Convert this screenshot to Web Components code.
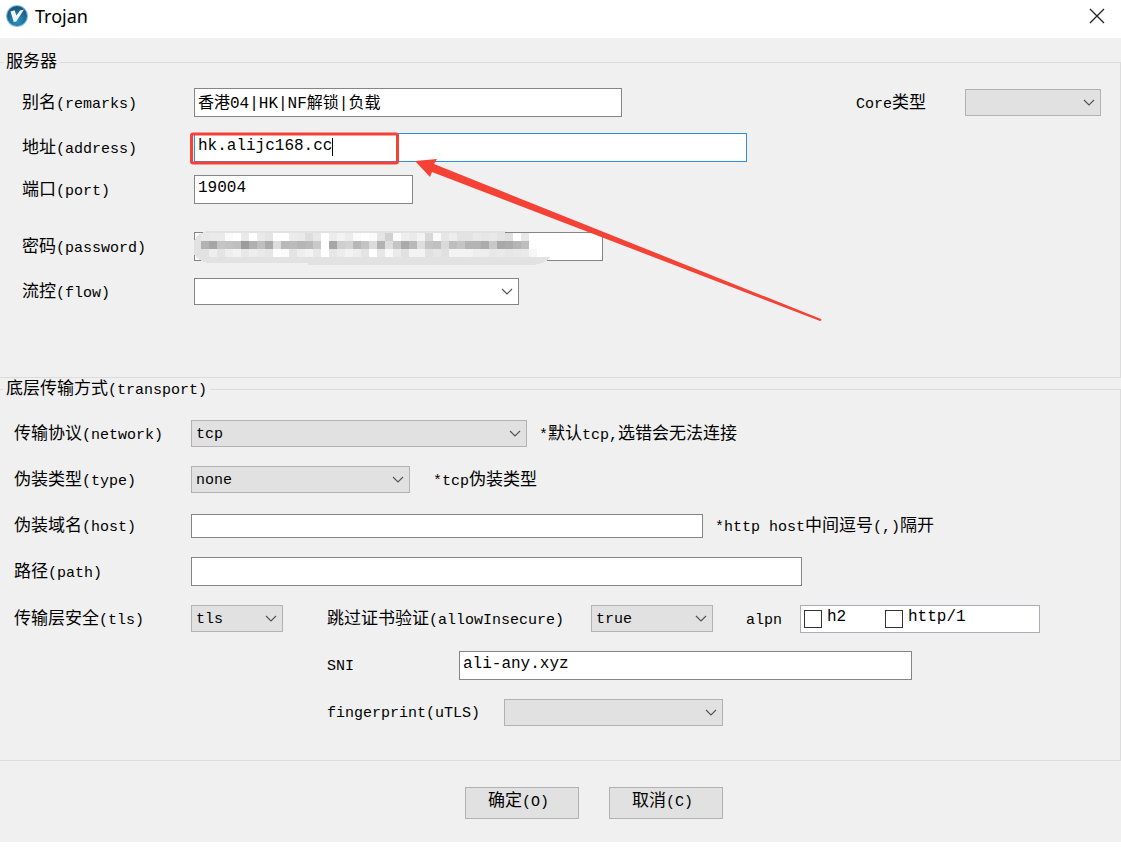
<!DOCTYPE html>
<html lang="zh-CN">
<head>
<meta charset="utf-8">
<title>Trojan</title>
<style>
  body {
    margin: 0;
    background: #fff;
    color: #000;
    font-family: "Liberation Mono", "Noto Sans CJK SC", monospace;
    font-size: 15px;
  }
</style>
</head>
<body>
<server-dialog></server-dialog>

<script>
const HAN = /([\u4e00-\u9fff]+)/;

/* Wraps Chinese runs so that they can be set a little larger than the Latin text. */
function mixed(text) {
  return text.split(HAN).map(t => HAN.test(t) ? `<span class="han">${t}</span>` : t).join("");
}

const BASE = `
  * { box-sizing: border-box; }
  .han { font-size: 17px; }
`;

function define(name, render) {
  customElements.define(name, class extends HTMLElement {
    connectedCallback() {
      if (this.shadowRoot) return;
      this.attachShadow({ mode: "open" }).innerHTML = render(this);
    }
  });
}

define("title-bar", el => `
  <style>${BASE}
    :host { display: flex; align-items: center; height: 38px; padding: 0 16px 7px 6px; gap: 7px; background: #fff; }
    h1 { flex: 1; margin: 0; font: 400 18px/24px "Noto Sans", sans-serif; }
    svg { display: block; }
    button { border: 0; padding: 0; background: none; }
  </style>
  <svg width="22" height="22" viewBox="0 0 22 22" aria-hidden="true">
    <defs><radialGradient id="g" cx="50%" cy="75%" r="65%">
      <stop offset="0" stop-color="#2d93c4"/><stop offset="1" stop-color="#17587f"/>
    </radialGradient></defs>
    <circle cx="11" cy="11" r="11" fill="#86c3e2"/>
    <circle cx="11" cy="11" r="10" fill="url(#g)"/>
    <path d="M4.5 6.500 L8.600 5.200 L10.400 10.600 L14 5.400 L18 4.600 L10.200 16.600 L7.800 17 Z" fill="#f2f6f8"/>
  </svg>
  <h1><slot></slot></h1>
  <button type="button" aria-label="关闭">
    <svg width="16" height="16" viewBox="0 0 16 16"><path d="M1 1 L15 15 M15 1 L1 15" stroke="#222" stroke-width="1.3"/></svg>
  </button>
`);

define("group-box", el => `
  <style>${BASE}
    :host { display: block; }
    fieldset { margin: 0; min-width: 0; border: 1px solid #dcdcdc; border-left: 0; padding: 0; }
    legend { margin-left: 3px; padding: 2px 3px 0; height: 20px; line-height: 18px; }
    .body { padding: var(--pad, 0); }
  </style>
  <fieldset><legend>${mixed(el.getAttribute("caption"))}</legend><div class="body"><slot></slot></div></fieldset>
`);

const chevron = `<svg class="chev" width="12" height="7" viewBox="0 0 12 7" aria-hidden="true"><path d="M1 1 L6 6 L11 1" fill="none" stroke="#555" stroke-width="1.2"/></svg>`;

define("form-field", el => {
  const a = n => el.getAttribute(n) || "";
  const text = a("text");
  const control = a("kind") === "select"
    ? `<select id="c"><option>${text}</option></select>${chevron}`
    : `<input id="c" type="text" value="${text}" autocomplete="off" spellcheck="false">`;
  return `
  <style>${BASE}
    :host { display: flex; align-items: center; height: 29px; white-space: nowrap; }
    label { flex: 0 0 var(--label, 177px); padding-top: 3px; line-height: 20px; }
    .box { position: relative; flex: 0 1 auto; width: ${a("width")}px; display: flex; align-items: center; min-width: 0; }
    input, select {
      width: 100%; margin: 0; border: 1px solid #858585; border-radius: 0; outline: 0;
      background: #fff; color: #000; font: inherit; font-size: 16px; appearance: none;
    }
    input { height: 29px; padding: 0 3px 4px; line-height: 20px; }
    select { height: 27px; padding: 2px 24px 0 4px; background: #e1e1e1; border-color: #b2b2b2; font-size: 15px; }
    :host([plain]) select { background: #fff; border-color: #858585; }
    :host([slim]) input { height: 24px; }
    :host([active]) input { border-color: #2f8fdf; }
    .chev { position: absolute; right: 6px; top: 10px; pointer-events: none; }
    .note { margin-left: ${a("gap") || 12}px; padding-top: 3px; line-height: 20px; }
  </style>
  <label for="c">${mixed(a("label"))}</label>
  <span class="box">${control}<slot></slot></span>
  ${a("note") ? `<span class="note">${mixed(a("note"))}</span>` : ""}`;
});

define("check-list", el => `
  <style>${BASE}
    :host { display: flex; flex: 0 1 294px; align-items: center; height: 29px; }
    .name { flex: 0 0 54px; padding-top: 3px; }
    .list { flex: 1; display: grid; grid-template-columns: 81px 1fr; align-items: center; height: 28px; padding-left: 3px; border: 1px solid #abadb3; background: #fff; }
    label { display: flex; align-items: center; gap: 5px; font-size: 16px; line-height: 22px; }
    label span { padding-bottom: 4px; }
    input { appearance: none; width: 18px; height: 18px; margin: 0; border: 1px solid #333; background: #fff; }
  </style>
  <span class="name" id="n">${el.getAttribute("label")}</span>
  <div class="list" role="group" aria-labelledby="n">
    ${el.getAttribute("items").split(",").map(i => `<label><input type="checkbox"><span>${i}</span></label>`).join("")}
  </div>
`);

define("push-button", el => `
  <style>${BASE}
    :host { display: block; }
    button { width: 114px; height: 32px; padding: 0 6px 2px 0; border: 1px solid #b2b2b2; background: #e1e1e1; color: #000; font: inherit; font-size: 15px; line-height: 20px; }
  </style>
  <button type="button">${mixed(el.getAttribute("caption"))}</button>
`);

/* Pixelated cover over a secret value: one grey level per 8px cell, in three bands. */
define("pixel-cover", () => {
  const rows = [
    "e8 ea ea fa ff ea ff ea e4 ff ff ec ea de e8 ff ec f3 ec fa ff fb e4 d1 fa ee ea f3 d8 fa e6 ee e3 e3 e9 e6 e8 e3 df ff e8",
    "b2 a6 c5 c2 bf 9c b0 bf aa dc b9 bb b5 b9 c9 ff a6 cf d3 b8 c4 dc b3 dd c5 aa b9 dd c3 c0 da be c5 b4 b4 ac c8 a8 ab b5 bd",
    "e2 ee e4 ee f3 e8 ee ea e6 ff fb e4 ee f3 e8 ff e6 ec f3 ee e4 ff e6 f9 ea e1 f3 f3 e1 e6 e1 f3 f3 f2 ee ee e8 ea e6 e8 ea f6"
  ];
  const cells = rows.map((r, y) => r.split(" ").map((v, x) =>
    `<rect x="${7 + x * 8}" y="${2 + y * 8}" width="8" height="8" fill="#${v + v + v}"/>`).join("")).join("");
  return `
  <style>
    :host { position: absolute; left: 0; top: -1px; pointer-events: none; }
    svg { display: block; }
  </style>
  <svg width="360" height="36" viewBox="0 0 360 36" shape-rendering="crispEdges" aria-hidden="true">
    <path d="M14 0 H311 V2 H335 V26 H357 Q351 34 335 34 H114 V32 H14 Q7 31 2 26 L0 23 V10 Q4 2 14 0 Z" fill="#e2e2e2"/>
    <path d="M335 2 H345 V26 H335 Z" fill="#fff"/>
    ${cells}
  </svg>`;
});

/* Red frame, text cursor and arrow that point out the address. */
define("red-marker", () => `
  <style>
    :host { position: absolute; left: -4px; top: -2px; z-index: 2; pointer-events: none; }
    svg { display: block; }
  </style>
  <svg width="636" height="194" viewBox="0 0 636 194" aria-hidden="true">
    <path d="M142 7 V25" stroke="#000" stroke-width="1" shape-rendering="crispEdges"/>
    <rect x="1.500" y="3" width="206" height="29" rx="1.500" fill="none" stroke="#f44336" stroke-width="3"/>
    <path d="M225 30 L247 28 L244 33 L631 188 Q632 190 630 190 L242 41 L240 46 Z" fill="#f44336"/>
  </svg>
`);

define("server-dialog", () => `
  <style>${BASE}
    :host { display: block; }
    main { background: #f0f0f0; padding: 14px 0 0; }
    .server { --pad: 16px 19px 71px 22px; --label: 172px; }
    .transport { --pad: 20px 19px 33px 14px; --label: 177px; margin-top: 1px; }
    .row { display: flex; }
    .stack { display: flex; flex-direction: column; }
    .a { gap: 17px; }
    .tls { gap: 18px; margin-top: 18px; }
    .core { --label: 109px; margin-left: auto; }
    .sub { margin-left: 313px; }
    .gap13 { margin-top: 13px; } .gap16 { margin-top: 16px; } .gap28 { margin-top: 28px; }
    .insecure { --label: 264px; margin-left: 44px; }
    .alpn { margin-left: 33px; }
    .sni { --label: 132px; }
    footer { display: flex; justify-content: center; gap: 30px; padding: 26px 0 23px 66px; }
  </style>
  <title-bar>Trojan</title-bar>
  <main>
    <group-box class="server" caption="服务器">
      <div class="stack">
        <div class="row">
          <form-field label="别名(remarks)" text="香港04|HK|NF解锁|负载" width="428"></form-field>
          <form-field class="core" kind="select" label="Core类型" width="136"></form-field>
        </div>
        <form-field class="gap16" active label="地址(address)" text="hk.alijc168.cc" width="553"><red-marker></red-marker></form-field>
        <form-field class="gap13" label="端口(port)" text="19004" width="219"></form-field>
        <form-field class="gap28" label="密码(password)" width="409"><pixel-cover></pixel-cover></form-field>
        <form-field class="gap16" plain kind="select" label="流控(flow)" width="325"></form-field>
      </div>
    </group-box>
    <group-box class="transport" caption="底层传输方式(transport)">
      <div class="stack a">
        <form-field kind="select" label="传输协议(network)" text="tcp" width="336" note="*默认tcp,选错会无法连接"></form-field>
        <form-field kind="select" label="伪装类型(type)" text="none" width="219" note="*tcp伪装类型" gap="23"></form-field>
        <form-field slim label="伪装域名(host)" width="512" note="*http host中间逗号(,)隔开"></form-field>
        <form-field label="路径(path)" width="611"></form-field>
      </div>
      <div class="stack tls">
        <div class="row">
          <form-field kind="select" label="传输层安全(tls)" text="tls" width="92"></form-field>
          <form-field class="insecure" kind="select" label="跳过证书验证(allowInsecure)" text="true" width="122"></form-field>
          <check-list class="alpn" label="alpn" items="h2,http/1"></check-list>
        </div>
        <form-field class="sub sni" label="SNI" text="ali-any.xyz" width="453"></form-field>
        <form-field class="sub" kind="select" label="fingerprint(uTLS)" width="219"></form-field>
      </div>
    </group-box>
    <footer>
      <push-button caption="确定(O)"></push-button>
      <push-button caption="取消(C)"></push-button>
    </footer>
  </main>
`);
</script>
</body>
</html>
